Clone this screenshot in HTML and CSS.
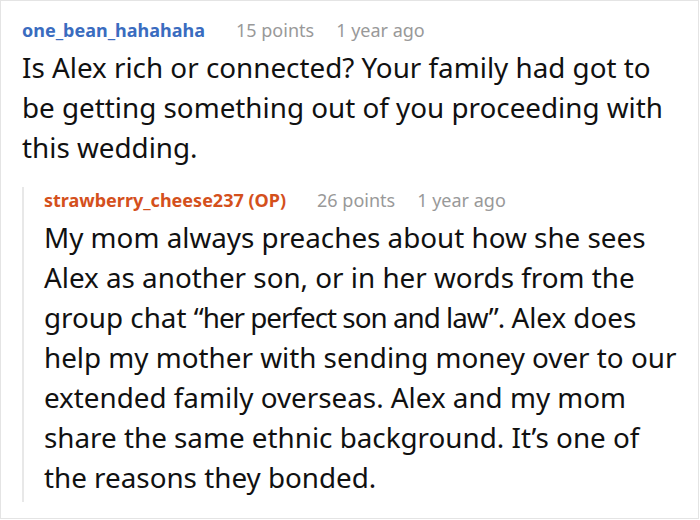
FILE: index.html
```html
<!DOCTYPE html>
<html>
<head>
<meta charset="utf-8">
<link rel="stylesheet" href="styles.css">
</head>
<body>
<div class="frame">
  <div class="comment">
    <div class="meta">
      <span class="user">one_bean_hahahaha</span>
      <span class="info">15 points</span>
      <span class="info">1 year ago</span>
    </div>
    <p class="text">Is Alex rich or connected? Your family had got to<br>be getting something out of you proceeding with<br>this wedding.</p>
    <div class="reply">
      <div class="meta">
        <span class="user op">strawberry_cheese237 (OP)</span>
        <span class="info">26 points</span>
        <span class="info">1 year ago</span>
      </div>
      <p class="text">My mom always preaches about how she sees<br>Alex as another son, or in her words from the<br>group chat <span class="quote">“her perfect son and law”.</span> Alex does<br>help my mother with sending money over to our<br>extended family overseas. Alex and my mom<br>share the same ethnic background. It’s one of<br>the reasons they bonded.</p>
    </div>
  </div>
</div>
</body>
</html>
```

FILE: styles.css
```css
html, body {
  margin: 0;
  padding: 0;
  background: #fff;
}
.frame {
  box-sizing: border-box;
  width: 699px;
  height: 519px;
  border: 1px solid #e4e4e4;
  font-family: "Noto Sans", "Open Sans", sans-serif;
  color: #111;
}
.comment {
  padding: 16px 18px 0 21px;
}
.meta {
  display: flex;
  gap: 22px;
  font-size: 18px;
  line-height: 26px;
}
.user {
  font-weight: 700;
  color: #3a6cbf;
  margin-right: 9px;
}
.user.op {
  color: #d4501c;
}
.info {
  color: #999;
}
.text {
  margin: 4px 0 0;
  font-size: 27.8px;
  line-height: 40px;
  white-space: nowrap;
}
.quote {
  letter-spacing: -1px;
}
.reply {
  margin-top: 33px;
  border-left: 2px solid #e8e8e8;
  padding: 0 0 5px 20px;
}
.reply .meta {
  margin-top: -13px;
}
```
